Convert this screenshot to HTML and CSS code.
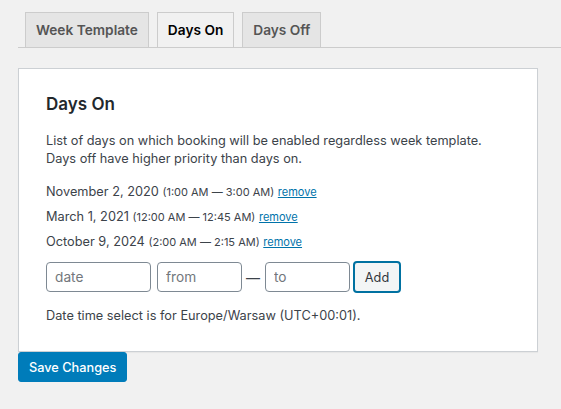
FILE: index.html
```html
<!DOCTYPE html>
<html>
<head>
<meta charset="utf-8">
<link rel="stylesheet" href="styles.css">
</head>
<body>
<div class="wrap">
  <nav class="tabs">
    <a class="tab">Week Template</a>
    <a class="tab active">Days On</a>
    <a class="tab">Days Off</a>
  </nav>
  <div class="panel">
    <h2 class="title">Days On</h2>
    <p class="desc">List of days on which booking will be enabled regardless week template.<br>Days off have higher priority than days on.</p>
    <ul class="days">
      <li>November 2, 2020 <small>(1:00 AM — 3:00 AM)</small> <a class="remove">remove</a></li>
      <li>March 1, 2021 <small>(12:00 AM — 12:45 AM)</small> <a class="remove">remove</a></li>
      <li>October 9, 2024 <small>(2:00 AM — 2:15 AM)</small> <a class="remove">remove</a></li>
    </ul>
    <div class="add-row">
      <input class="field field-date" type="text" placeholder="date">
      <input class="field field-time" type="text" placeholder="from">
      <span class="dash">—</span>
      <input class="field field-time" type="text" placeholder="to">
      <button class="btn-add">Add</button>
    </div>
    <p class="tz">Date time select is for Europe/Warsaw (UTC+00:01).</p>
  </div>
  <button class="btn-save">Save Changes</button>
</div>
</body>
</html>
```
FILE: styles.css
```css
html, body {
  margin: 0;
  padding: 0;
  background: #f1f1f1;
}
body {
  font-family: Inter, "Liberation Sans", sans-serif;
  font-size: 12.75px;
  color: #3c434a;
}
.wrap {
  padding: 12px 0 0 18px;
}
.tabs {
  display: flex;
  gap: 8px;
  padding-left: 7px;
  border-bottom: 1px solid #ccc;
}
.tab {
  display: block;
  padding: 0 10px;
  height: 34px;
  line-height: 34px;
  font-size: 13.7px;
  font-weight: 600;
  color: #555;
  background: #e5e5e5;
  border: 1px solid #ccc;
  border-bottom: none;
}
.tab.active {
  background: #f1f1f1;
  color: #000;
  position: relative;
  top: 1px;
  margin-top: -1px;
}
.panel {
  box-sizing: border-box;
  width: 520px;
  margin-top: 20px;
  background: #fff;
  border: 1px solid #ccd0d4;
  box-shadow: 0 1px 1px rgba(0,0,0,.04);
  padding: 0 27px;
}
.title {
  margin: 24px 0 0;
  font-size: 17px;
  font-weight: 600;
  line-height: 22px;
  color: #23282d;
}
.desc {
  margin: 17px 0 0;
  line-height: 18px;
}
.days {
  list-style: none;
  margin: 11px 0 0;
  padding: 0;
}
.days li {
  line-height: 25px;
  height: 25px;
}
.days small {
  font-size: 11px;
  line-height: 1;
}
.remove {
  font-size: 11px;
  line-height: 1;
  color: #0073aa;
  text-decoration: underline;
}
.add-row {
  display: flex;
  align-items: center;
  margin-top: 7px;
}
.field {
  box-sizing: border-box;
  height: 30px;
  border: 1px solid #7e8993;
  border-radius: 4px;
  padding: 0 8px;
  font-family: inherit;
  font-size: 13.7px;
  color: #32373c;
  background: #fff;
}
.field::placeholder { color: #72777c; }
.field-date { width: 105px; margin-right: 6px; }
.field-time { width: 85px; }
.dash {
  font-size: 14px;
  margin: 0 5px 0 4px;
}
.btn-add {
  box-sizing: border-box;
  height: 32px;
  width: 48px;
  padding: 0;
  margin-left: 3px;
  border: 2px solid #0071a1;
  border-radius: 4px;
  background: #f3f5f6;
  color: #32373c;
  font-family: inherit;
  font-size: 12.75px;
}
.tz {
  margin: 13px 0 26px;
  line-height: 19px;
}
.btn-save {
  display: block;
  height: 30px;
  padding: 0 10px;
  border: 1px solid #007cba;
  border-radius: 3px;
  background: #007cba;
  color: #fff;
  font-family: inherit;
  font-size: 12.75px;
  font-weight: 500;
}
```
